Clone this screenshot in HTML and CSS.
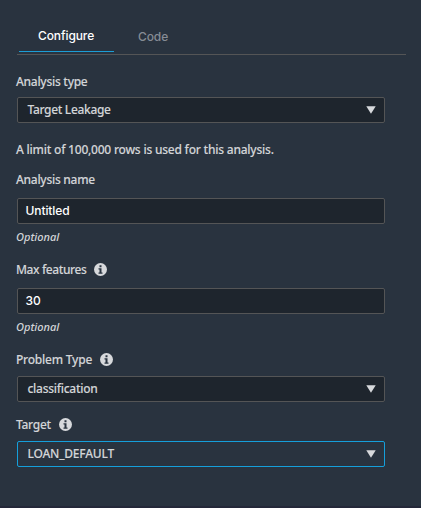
FILE: index.html
```html
<!DOCTYPE html>
<html lang="en">
<head>
<meta charset="utf-8">
<title>Configure analysis</title>
<link rel="stylesheet" href="styles.css">
</head>
<body>
<main class="panel">
  <nav class="tabs">
    <a class="tab tab-active">Configure</a>
    <a class="tab">Code</a>
  </nav>
  <section class="field">
    <div class="label label-first"><span>Analysis type</span></div>
    <div class="box select"><span class="value value-first">Target Leakage</span><svg class="arrow" viewBox="0 0 10 8"><path d="M0.3 0.3H9.7L5 7.8Z"/></svg></div>
  </section>
  <p class="note">A limit of 100,000 rows is used for this analysis.</p>
  <section class="field">
    <div class="label label-input"><span>Analysis name</span></div>
    <div class="box input">Untitled</div>
    <div class="hint">Optional</div>
  </section>
  <section class="field">
    <div class="label label-input"><span class="tight">Max features</span><svg class="info" viewBox="0 0 13 13"><circle cx="6.5" cy="6.5" r="6.5"/><path d="M5.5 2.2h2v2h-2zM4.5 5.2h3v4.3h1v1.2h-4V9.5h1V6.4h-1z"/></svg></div>
    <div class="box input">30</div>
    <div class="hint">Optional</div>
  </section>
  <section class="field">
    <div class="label"><span class="problem">Problem Type</span><svg class="info" viewBox="0 0 13 13"><circle cx="6.5" cy="6.5" r="6.5"/><path d="M5.5 2.2h2v2h-2zM4.5 5.2h3v4.3h1v1.2h-4V9.5h1V6.4h-1z"/></svg></div>
    <div class="box select"><span class="value">classification</span><svg class="arrow" viewBox="0 0 10 8"><path d="M0.3 0.3H9.7L5 7.8Z"/></svg></div>
  </section>
  <section class="field field-target">
    <div class="label"><span>Target</span><svg class="info" viewBox="0 0 13 13"><circle cx="6.5" cy="6.5" r="6.5"/><path d="M5.5 2.2h2v2h-2zM4.5 5.2h3v4.3h1v1.2h-4V9.5h1V6.4h-1z"/></svg></div>
    <div class="box select focused"><span class="value loose">LOAN_DEFAULT</span><svg class="arrow" viewBox="0 0 10 8"><path d="M0.3 0.3H9.7L5 7.8Z"/></svg></div>
  </section>
</main>
</body>
</html>
```
FILE: styles.css
```css
* { box-sizing: border-box; }
body {
  margin: 0;
  background: #29333f;
  color: #d3d5d8;
  font: 500 12px/18px "Noto Sans", "Open Sans", sans-serif;
  letter-spacing: -0.28px;
  -webkit-text-stroke: 0.12px currentColor;
}
.panel {
  height: 508px;
  padding: 20px 15px 0 17px;
  border-bottom: 2px solid #242839;
  overflow: hidden;
}
.tabs {
  display: flex;
  height: 35px;
  padding-left: 2px;
  border-bottom: 1px solid #545556;
  margin-bottom: 18px;
}
.tab {
  height: 32px;
  padding: 8px 24px 0 24px;
  font: 500 12px/18px Inter, sans-serif;
  letter-spacing: -0.1px;
  color: #868c95;
  -webkit-text-stroke: 0;
}
.tab-active {
  width: 95px;
  padding: 7px 0 0 19px;
  color: #fff;
  border-bottom: 1px solid #1b9dd5;
}
.label {
  display: flex;
  align-items: center;
  height: 18px;
  margin: 0 0 7px -1px;
}
.label-first { margin-bottom: 6px; }
.label-input { margin-bottom: 9px; }
.tight { letter-spacing: -0.4px; }
.problem { letter-spacing: -0.22px; }
.loose { letter-spacing: -0.2px; }
.value-first { letter-spacing: -0.33px; }
.info {
  width: 13px;
  height: 13px;
  margin: 0 0 1px 8px;
  fill: #d7d9dc;
}
.info path { fill: #29333f; }
.box {
  display: flex;
  align-items: center;
  width: 368px;
  height: 26px;
  border: 1px solid #545556;
  border-radius: 2px;
  background: #1e252d;
}
.select { padding: 0 8px 0 9.5px; justify-content: space-between; }
.input {
  padding-left: 7.5px;
  color: #fff;
  font: 500 12px/18px Inter, sans-serif;
  letter-spacing: -0.1px;
  -webkit-text-stroke: 0;
}
.focused { border-color: #159fdb; background: #29333f; }
.arrow { width: 10px; height: 8px; fill: #d7d9dc; }
.note { height: 18px; margin: 18px 0 12px -1px; white-space: nowrap; letter-spacing: -0.22px; }
.hint {
  height: 18px;
  margin: 4px 0 15px -1px;
  font-size: 11px;
  font-style: italic;
  letter-spacing: 0;
  -webkit-text-stroke: 0;
}
.field-target { margin-top: 14px; }
```
